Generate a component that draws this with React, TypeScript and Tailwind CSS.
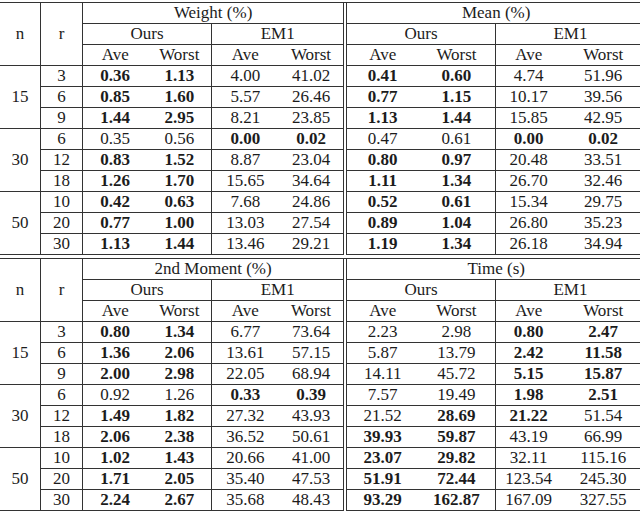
import React from 'react';

type Block = { n: string; rows: string[][] };

interface TableProps {
  left: string;
  right: string;
  blocks: Block[];
}

// a trailing * marks a bold value
const weightMean: Block[] = [
  {
    n: '15',
    rows: [
      ['3', '0.36*', '1.13*', '4.00', '41.02', '0.41*', '0.60*', '4.74', '51.96'],
      ['6', '0.85*', '1.60*', '5.57', '26.46', '0.77*', '1.15*', '10.17', '39.56'],
      ['9', '1.44*', '2.95*', '8.21', '23.85', '1.13*', '1.44*', '15.85', '42.95'],
    ],
  },
  {
    n: '30',
    rows: [
      ['6', '0.35', '0.56', '0.00*', '0.02*', '0.47', '0.61', '0.00*', '0.02*'],
      ['12', '0.83*', '1.52*', '8.87', '23.04', '0.80*', '0.97*', '20.48', '33.51'],
      ['18', '1.26*', '1.70*', '15.65', '34.64', '1.11*', '1.34*', '26.70', '32.46'],
    ],
  },
  {
    n: '50',
    rows: [
      ['10', '0.42*', '0.63*', '7.68', '24.86', '0.52*', '0.61*', '15.34', '29.75'],
      ['20', '0.77*', '1.00*', '13.03', '27.54', '0.89*', '1.04*', '26.80', '35.23'],
      ['30', '1.13*', '1.44*', '13.46', '29.21', '1.19*', '1.34*', '26.18', '34.94'],
    ],
  },
];

const momentTime: Block[] = [
  {
    n: '15',
    rows: [
      ['3', '0.80*', '1.34*', '6.77', '73.64', '2.23', '2.98', '0.80*', '2.47*'],
      ['6', '1.36*', '2.06*', '13.61', '57.15', '5.87', '13.79', '2.42*', '11.58*'],
      ['9', '2.00*', '2.98*', '22.05', '68.94', '14.11', '45.72', '5.15*', '15.87*'],
    ],
  },
  {
    n: '30',
    rows: [
      ['6', '0.92', '1.26', '0.33*', '0.39*', '7.57', '19.49', '1.98*', '2.51*'],
      ['12', '1.49*', '1.82*', '27.32', '43.93', '21.52', '28.69*', '21.22*', '51.54'],
      ['18', '2.06*', '2.38*', '36.52', '50.61', '39.93*', '59.87*', '43.19', '66.99'],
    ],
  },
  {
    n: '50',
    rows: [
      ['10', '1.02*', '1.43*', '20.66', '41.00', '23.07*', '29.82*', '32.11', '115.16'],
      ['20', '1.71*', '2.05*', '35.40', '47.53', '51.91*', '72.44*', '123.54', '245.30'],
      ['30', '2.24*', '2.67*', '35.68', '48.43', '93.29*', '162.87*', '167.09', '327.55'],
    ],
  },
];

const line = 'border-[#333]';

function Cell({ value, right }: { value: string; right?: boolean }) {
  const bold = value.endsWith('*');
  return (
    <td className={`p-0 border-b ${line} ${right ? 'border-r' : ''} ${bold ? 'font-bold' : ''}`}>
      {bold ? value.slice(0, -1) : value}
    </td>
  );
}

function ResultTable({ left, right, blocks }: TableProps) {
  return (
    <table className="table-fixed border-collapse text-center w-[645px] [font-family:Liberation_Serif,serif] text-[17px] leading-[20px] text-[#1c1c1c]">
      <colgroup>
        <col className="w-[40px]" />
        <col className="w-[41px]" />
        <col className="w-[64px]" />
        <col className="w-[63px]" />
        <col className="w-[66px]" />
        <col className="w-[64px]" />
        <col className="w-[3px]" />
        <col className="w-[70px]" />
        <col className="w-[76px]" />
        <col className="w-[65px]" />
        <col className="w-[82px]" />
      </colgroup>
      <tbody>
        {/* header */}
        <tr className={`h-[20px] border-t ${line}`}>
          <td rowSpan={3} className={`p-0 border-r border-b ${line}`}>n</td>
          <td rowSpan={3} className={`p-0 border-r border-b ${line}`}>r</td>
          <td colSpan={4} className={`p-0 border-b ${line}`}>{left}</td>
          <td rowSpan={12} className={`p-0 border-x ${line}`}></td>
          <td colSpan={4} className={`p-0 border-b ${line}`}>{right}</td>
        </tr>
        <tr className="h-[20px]">
          <td colSpan={2} className={`p-0 border-r border-b ${line}`}>Ours</td>
          <td colSpan={2} className={`p-0 border-b ${line}`}>EM1</td>
          <td colSpan={2} className={`p-0 border-r border-b ${line}`}>Ours</td>
          <td colSpan={2} className={`p-0 border-b ${line}`}>EM1</td>
        </tr>
        <tr className="h-[20px]">
          <td className={`p-0 border-b ${line}`}>Ave</td>
          <td className={`p-0 border-r border-b ${line}`}>Worst</td>
          <td className={`p-0 border-b ${line}`}>Ave</td>
          <td className={`p-0 border-b ${line}`}>Worst</td>
          <td className={`p-0 border-b ${line}`}>Ave</td>
          <td className={`p-0 border-r border-b ${line}`}>Worst</td>
          <td className={`p-0 border-b ${line}`}>Ave</td>
          <td className={`p-0 border-b ${line}`}>Worst</td>
        </tr>

        {/* data */}
        {blocks.map((block) =>
          block.rows.map((row, i) => (
            <tr key={block.n + row[0]} className="h-[20px]">
              {i === 0 && (
                <td rowSpan={3} className={`p-0 border-r border-b ${line}`}>{block.n}</td>
              )}
              <td className={`p-0 border-r border-b ${line}`}>{row[0]}</td>
              <Cell value={row[1]} />
              <Cell value={row[2]} right />
              <Cell value={row[3]} />
              <Cell value={row[4]} />
              <Cell value={row[5]} />
              <Cell value={row[6]} right />
              <Cell value={row[7]} />
              <Cell value={row[8]} />
            </tr>
          ))
        )}
      </tbody>
    </table>
  );
}

export default function App() {
  return (
    <div className="w-[640px] h-[514px] overflow-hidden bg-white pt-[2px]">
      <ResultTable left="Weight (%)" right="Mean (%)" blocks={weightMean} />
      <div className="h-[3px]" />
      <ResultTable left="2nd Moment (%)" right="Time (s)" blocks={momentTime} />
    </div>
  );
}
